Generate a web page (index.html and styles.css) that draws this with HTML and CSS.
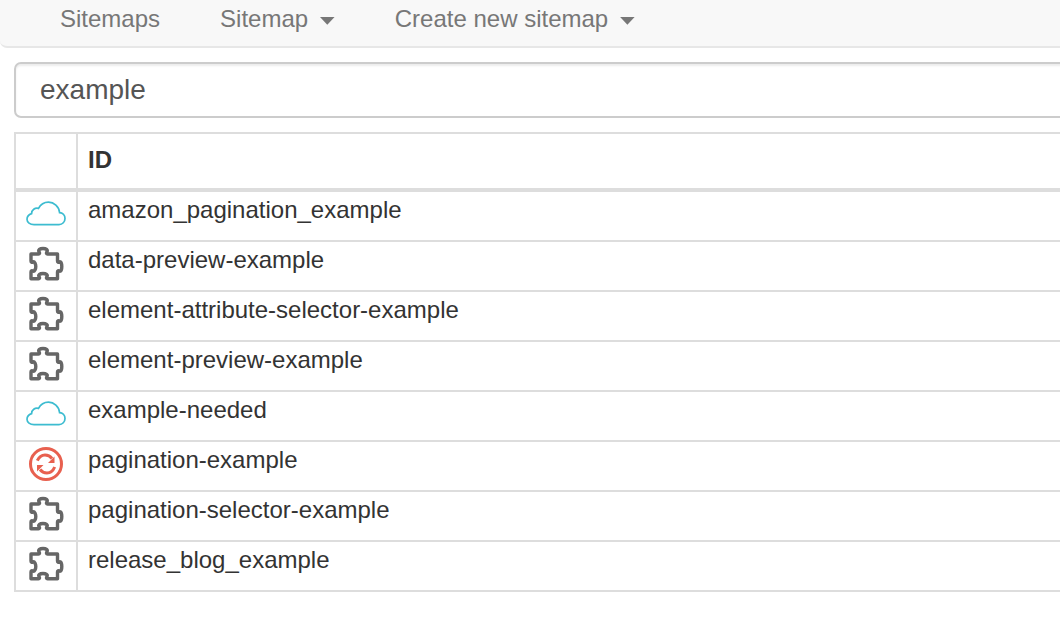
FILE: index.html
```html
<!DOCTYPE html>
<html lang="en">
<head>
	<meta charset="UTF-8">
	<title>Sitemaps</title>
	<link rel="stylesheet" href="styles.css">
</head>
<body>
	<svg class="defs" width="0" height="0">
		<symbol id="cloud" viewBox="0 0 40 25">
			<path d="M8 23.6H33C36.5 23.6 39 20.8 39 17.5C39 14.3 36.6 11.8 33.6 11.6C33 5.6 28 1.2 22.5 1.2C18 1.2 14.5 3.6 12.5 7.4C9 6.4 5.6 9 5.6 12.6C2.8 13.6 1 15.8 1 18.2C1 21.3 4 23.6 8 23.6Z"/>
		</symbol>
		<symbol id="puzzle" viewBox="0 0 36 36">
			<path d="M3 8H10.5C11.5 8 11.8 7 11.2 6C9.8 3.8 12 2.5 15 2.5C18 2.5 20.2 3.8 18.8 6C18.2 7 18.5 8 19.5 8H29.5V15C29.5 16.2 30.5 16.5 31.3 16C33.3 15 33.8 18.5 33.8 20.5C33.8 22.5 33.3 26 31.3 25C30.5 24.5 29.5 24.8 29.5 26V32.8H19.5C18.5 32.8 18.2 31.8 18.8 30.8C20.2 28.6 18 27.5 15 27.5C12 27.5 9.8 28.6 11.2 30.8C11.8 31.8 11.5 32.8 10.5 32.8H3V26C3 24.8 4 24.5 4.7 25C6.7 26 7.8 22.5 7.8 20.5C7.8 18.5 6.7 15 4.7 16C4 16.5 3 16.2 3 15Z"/>
		</symbol>
		<symbol id="sync" viewBox="0 0 36 36">
			<circle cx="18" cy="18" r="15.5"/>
			<path class="arc" d="M9.3 14.7C11 11 14 9 17 9C20 9 22.5 10.5 24 12.5"/>
			<path class="arc" d="M26.7 21C25 25 22 27 19 27C16 27 13.5 25.5 12 23.5"/>
			<path class="head" d="M26.5 10.5V17H20Z"/>
			<path class="head" d="M9 25.5V19H15.5Z"/>
		</symbol>
	</svg>

	<div class="navbar">
		<a href="#">Sitemaps</a>
		<a href="#">Sitemap <span class="caret"></span></a>
		<a href="#">Create new sitemap <span class="caret"></span></a>
	</div>

	<div class="content">
		<input type="text" class="search" value="example">

		<table class="sitemaps">
			<thead>
				<tr><th class="state"></th><th>ID</th></tr>
			</thead>
			<tbody>
				<tr><td class="state"><svg class="icon-cloud"><use href="#cloud"/></svg></td><td>amazon_pagination_example</td></tr>
				<tr><td class="state"><svg class="icon-puzzle"><use href="#puzzle"/></svg></td><td>data-preview-example</td></tr>
				<tr><td class="state"><svg class="icon-puzzle"><use href="#puzzle"/></svg></td><td>element-attribute-selector-example</td></tr>
				<tr><td class="state"><svg class="icon-puzzle"><use href="#puzzle"/></svg></td><td>element-preview-example</td></tr>
				<tr><td class="state"><svg class="icon-cloud"><use href="#cloud"/></svg></td><td>example-needed</td></tr>
				<tr><td class="state"><svg class="icon-sync"><use href="#sync"/></svg></td><td>pagination-example</td></tr>
				<tr><td class="state"><svg class="icon-puzzle"><use href="#puzzle"/></svg></td><td>pagination-selector-example</td></tr>
				<tr><td class="state"><svg class="icon-puzzle"><use href="#puzzle"/></svg></td><td>release_blog_example</td></tr>
			</tbody>
		</table>
	</div>
</body>
</html>
```

FILE: styles.css
```css
*{
	box-sizing:border-box;
}
html,body{
	overflow:hidden;
}
body{
	margin:0;
	width:1060px;
	height:624px;
	font-family:"Liberation Sans",Arial,sans-serif;
	font-size:24px;
	color:#333;
	background:#fff;
}
.defs{
	position:absolute;
}
.navbar{
	display:flex;
	width:1100px;
	height:48px;
	padding-left:30px;
	background:#f8f8f8;
	border-bottom:2px solid #e7e7e7;
	border-bottom-left-radius:7px;
}
.navbar a{
	padding:0 30px;
	line-height:38px;
	color:#777;
	text-decoration:none;
	white-space:nowrap;
}
.caret{
	display:inline-block;
	width:15px;
	height:8px;
	margin-left:5px;
	vertical-align:middle;
	background:#777;
	clip-path:polygon(0 0,100% 0,50% 100%);
}
.content{
	width:1100px;
	padding:14px 0 0 14px;
}
.search{
	display:block;
	width:100%;
	height:56px;
	padding:0 24px 1px;
	border:2px solid #ccc;
	border-radius:7px;
	box-shadow:inset 0 2px 2px rgba(0,0,0,.075);
	font-family:inherit;
	font-size:28px;
	color:#555;
	outline:none;
}
.sitemaps{
	width:100%;
	margin-top:14px;
	border-collapse:collapse;
}
.sitemaps th,
.sitemaps td{
	height:50px;
	padding:0 10px 12px;
	border:2px solid #ddd;
	text-align:left;
	white-space:nowrap;
}
.sitemaps th{
	height:57px;
	padding:0 10px 2px;
	border-bottom-width:4px;
	font-weight:bold;
}
.sitemaps tbody tr:first-child td{
	height:51px;
	padding-bottom:13px;
}
.sitemaps .state,
.sitemaps tbody tr:first-child .state{
	width:62px;
	padding:0 0 4px;
	text-align:center;
}
svg{
	display:block;
	margin:0 auto;
	fill:none;
}
.icon-cloud{
	width:40px;
	height:25px;
	margin-bottom:1px;
	stroke:#3dbcd0;
	stroke-width:1.7;
}
.icon-puzzle{
	width:36px;
	height:36px;
	stroke:#666;
	stroke-width:3.4;
	stroke-linejoin:round;
}
.icon-sync{
	width:36px;
	height:36px;
	stroke:#e8604f;
	stroke-width:3;
}
.arc{
	stroke-width:3;
}
.head{
	fill:#e8604f;
	stroke:none;
}
```
